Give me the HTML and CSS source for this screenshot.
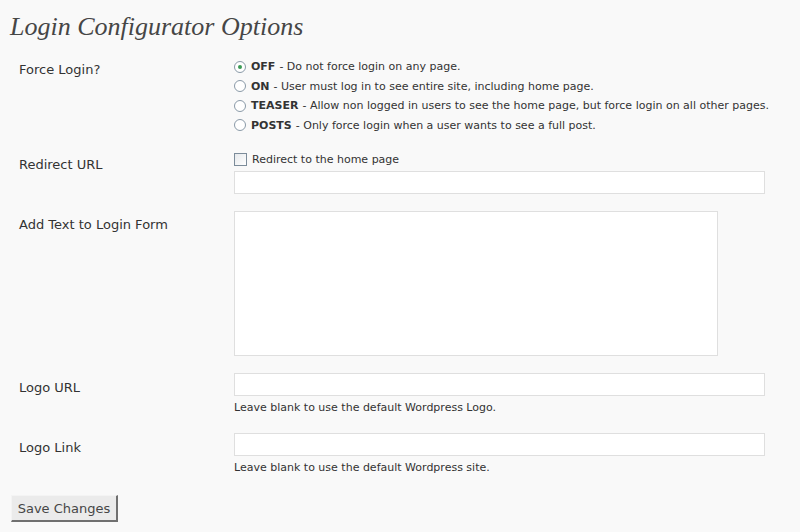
FILE: index.html
```html
<!DOCTYPE html>
<html>
<head>
<meta charset="utf-8">
<link rel="stylesheet" href="styles.css">
</head>
<body>
<div class="wrap">
  <h2 class="title">Login Configurator Options</h2>
  <div class="row row-force">
    <div class="label">Force Login?</div>
    <div class="field">
      <div class="opt"><span class="radio checked"></span><b>OFF</b> - Do not force login on any page.</div>
      <div class="opt"><span class="radio"></span><b>ON</b> - User must log in to see entire site, including home page.</div>
      <div class="opt"><span class="radio"></span><b>TEASER</b> - Allow non logged in users to see the home page, but force login on all other pages.</div>
      <div class="opt"><span class="radio"></span><b>POSTS</b> - Only force login when a user wants to see a full post.</div>
    </div>
  </div>
  <div class="row row-redirect">
    <div class="label">Redirect URL</div>
    <div class="field">
      <div class="check-line"><span class="checkbox"></span>Redirect to the home page</div>
      <div class="input wide"></div>
    </div>
  </div>
  <div class="row row-text">
    <div class="label">Add Text to Login Form</div>
    <div class="field">
      <div class="textarea"></div>
    </div>
  </div>
  <div class="row row-logo">
    <div class="label">Logo URL</div>
    <div class="field">
      <div class="input wide"></div>
      <div class="help">Leave blank to use the default Wordpress Logo.</div>
    </div>
  </div>
  <div class="row row-link">
    <div class="label">Logo Link</div>
    <div class="field">
      <div class="input wide"></div>
      <div class="help">Leave blank to use the default Wordpress site.</div>
    </div>
  </div>
  <div class="submit"><button class="button">Save Changes</button></div>
</div>
</body>
</html>
```

FILE: styles.css
```css
html, body {
  margin: 0;
  padding: 0;
  background: #f9f9f9;
}
body {
  font-family: "DejaVu Sans", Verdana, sans-serif;
  color: #333;
  font-size: 11px;
}
.wrap {
  display: flex;
  flex-direction: column;
  padding-left: 10px;
}
.title {
  margin: 12px 0 0 0;
  font-family: "Liberation Serif", Georgia, serif;
  font-style: italic;
  font-weight: normal;
  font-size: 26px;
  line-height: 30px;
  color: #464646;
}
.row {
  display: grid;
  grid-template-columns: 224px 1fr;
}
.label {
  padding-left: 9px;
  font-size: 13px;
  line-height: 16px;
  color: #333;
}
.row-force { margin-top: 15px; }
.row-force .label { padding-top: 5px; }
.opt {
  display: flex;
  align-items: center;
  height: 19.5px;
  white-space: nowrap;
}
.opt b { margin-right: 4px; }
.radio {
  width: 10px;
  height: 10px;
  border: 1px solid #8a9aa8;
  border-radius: 50%;
  background: #fff;
  margin-right: 5px;
  position: relative;
  box-sizing: content-box;
}
.radio.checked::after {
  content: "";
  position: absolute;
  left: 3px;
  top: 3px;
  width: 4px;
  height: 4px;
  border-radius: 50%;
  background: #3a9a54;
}
.row-redirect { margin-top: 15px; }
.row-redirect .label { padding-top: 7px; }
.check-line {
  display: flex;
  align-items: center;
  height: 18px;
}
.checkbox {
  width: 11px;
  height: 11px;
  border: 1px solid #7c8c9a;
  background: linear-gradient(135deg, #e6e9ec, #fff);
  margin-right: 5px;
}
.input {
  height: 21px;
  border: 1px solid #dfdfdf;
  background: #fff;
}
.wide { width: 529px; }
.row-redirect .input { margin-top: 3px; }
.row-text { margin-top: 17px; }
.row-text .label { padding-top: 6px; }
.textarea {
  width: 482px;
  height: 143px;
  border: 1px solid #dfdfdf;
  background: #fff;
}
.row-logo { margin-top: 17px; }
.row-logo .label, .row-link .label { padding-top: 7px; }
.help {
  margin-top: 5px;
  line-height: 14px;
  color: #333;
}
.row-link { margin-top: 18px; }
.submit { margin-top: 20px; }
.button {
  font-family: "DejaVu Sans", Verdana, sans-serif;
  font-size: 13px;
  color: #464646;
  background: #ebebeb;
  border-style: solid;
  border-width: 1px 2px 2px 1px;
  border-color: #f4f4f4 #707070 #707070 #f4f4f4;
  width: 107px;
  height: 27px;
  padding: 0;
  margin-left: 1px;
}
```
